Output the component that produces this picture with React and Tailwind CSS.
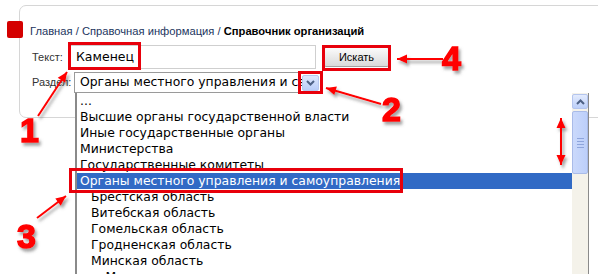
import React from "react";

const items = [
  { t: "...", lvl: 0 },
  { t: "Высшие органы государственной власти", lvl: 0 },
  { t: "Иные государственные органы", lvl: 0 },
  { t: "Министерства", lvl: 0 },
  { t: "Государственные комитеты", lvl: 0 },
  { t: "Органы местного управления и самоуправления", lvl: 0, sel: true },
  { t: "Брестская область", lvl: 1 },
  { t: "Витебская область", lvl: 1 },
  { t: "Гомельская область", lvl: 1 },
  { t: "Гродненская область", lvl: 1 },
  { t: "Минская область", lvl: 1 },
  { t: "г. Минск", lvl: 1 },
];

function Chevron({ up }) {
  return (
    <svg width="9" height="6" viewBox="0 0 9 6">
      <path
        d={up ? "M1 5 L4.5 1.5 L8 5" : "M1 1 L4.5 4.5 L8 1"}
        fill="none"
        stroke="#4d6185"
        strokeWidth="2"
      />
    </svg>
  );
}

function arrowHead(x1, y1, x2, y2, len = 10, hw = 4.5) {
  const dx = x2 - x1;
  const dy = y2 - y1;
  const L = Math.hypot(dx, dy);
  const ux = dx / L;
  const uy = dy / L;
  const bx = x2 - ux * len;
  const by = y2 - uy * len;
  const px = -uy * hw;
  const py = ux * hw;
  return `${x2},${y2} ${bx + px},${by + py} ${bx - px},${by - py}`;
}

function Arrow({ x1, y1, x2, y2, both }) {
  return (
    <g>
      <line x1={x1} y1={y1} x2={x2} y2={y2} stroke="#ff0000" strokeWidth="2" />
      <polygon points={arrowHead(x1, y1, x2, y2)} fill="#ff0000" />
      {both && <polygon points={arrowHead(x2, y2, x1, y1)} fill="#ff0000" />}
    </g>
  );
}

export default function App() {
  return (
    <div className="relative w-[598px] h-[274px] overflow-hidden bg-white font-['Liberation_Sans',sans-serif]">
      {/* Panel */}
      <div className="relative ml-[19px] mt-[5px] h-[113px] w-[620px] rounded-[7px] border border-[#d6d6d6] bg-white">
        <div className="absolute left-[-13px] top-[15px] h-[17px] w-[16px] rounded-[2px] bg-[#d40000]" />
        <div className="pl-[10px] pt-[18px]">
          <div className="text-[11.2px] leading-[15px] text-[#1c355e]">
            Главная / Справочная информация /{" "}
            <span className="font-bold text-black">Справочник организаций</span>
          </div>
          <div className="mt-[6px] flex h-[24px] items-center">
            <div className="w-[40px] pl-[2px] text-[11px] text-[#333]">Текст:</div>
            <div className="flex h-[24px] w-[246px] items-center border border-[#cfcfcf] pl-[5px] font-['DejaVu_Sans',sans-serif] text-[12.5px] text-black">
              Каменец
            </div>
            <button className="ml-[7px] flex h-[20px] w-[67px] items-center justify-center rounded-[3px] border border-[#a3a3a3] bg-gradient-to-b from-[#fbfbfb] to-[#dadada] text-[11px] text-black">
              Искать
            </button>
          </div>
          <div className="mt-[3px] flex h-[21px] items-center">
            <div className="w-[44px] pl-[2px] text-[11px] text-[#333]">Раздел:</div>
            <div className="flex h-[21px] w-[248px] items-center border border-[#9a9a9a] bg-white">
              <div className="flex-1 overflow-hidden whitespace-nowrap pl-[5px] font-['DejaVu_Sans',sans-serif] text-[12.4px] text-black">
                Органы местного управления и самоуправления
              </div>
              <div className="mr-[2px] flex h-[16px] w-[17px] items-center justify-center rounded-[2px] border border-[#b7c8ef] bg-gradient-to-b from-[#dfe8fd] to-[#b9cdf8]">
                <Chevron />
              </div>
            </div>
          </div>
        </div>
      </div>

      {/* Dropdown list */}
      <div className="absolute left-[75px] top-[93px] flex h-[200px] w-[514px] border-l-2 border-r border-[#8a8a8a] bg-white font-['DejaVu_Sans',sans-serif] text-[12.4px] text-black">
        <div className="flex-1">
          {items.map((it, i) => (
            <div
              key={i}
              className={`h-[16px] whitespace-nowrap leading-[16px] ${it.lvl ? "pl-[14px]" : "pl-[3px]"} ${it.sel ? "bg-[#316ac5] text-white" : ""}`}
            >
              {it.t}
            </div>
          ))}
        </div>
        <div className="flex w-[16px] flex-col bg-[#f4f2ea]">
          <div className="mt-[1px] flex h-[15px] items-center justify-center rounded-[2px] border border-[#b4c5ee] bg-gradient-to-b from-[#e3ebfd] to-[#bccff9]">
            <Chevron up />
          </div>
          <div className="mt-[2px] flex h-[63px] flex-col items-center justify-center gap-[2px] rounded-[2px] border border-[#a9bbe8] bg-gradient-to-r from-[#cbd9fb] to-[#bccffa]">
            <div className="h-px w-[7px] bg-[#8ea5dc]" />
            <div className="h-px w-[7px] bg-[#8ea5dc]" />
            <div className="h-px w-[7px] bg-[#8ea5dc]" />
            <div className="h-px w-[7px] bg-[#8ea5dc]" />
          </div>
        </div>
      </div>

      {/* Annotation boxes */}
      <div className="absolute left-[68px] top-[42px] h-[28px] w-[73px] border-[3px] border-[#e8000b]" />
      <div className="absolute left-[322px] top-[45px] h-[26px] w-[69px] border-[3px] border-[#e8000b]" />
      <div className="absolute left-[298px] top-[71px] h-[23px] w-[25px] border-[3px] border-[#e8000b]" />
      <div className="absolute left-[69px] top-[168px] h-[25px] w-[334px] border-[3px] border-[#e8000b]" />

      {/* Arrows and numbers */}
      <svg className="pointer-events-none absolute left-0 top-0" width="598" height="274">
        <defs>
          <filter id="sh" x="-50%" y="-50%" width="200%" height="200%">
            <feDropShadow dx="2" dy="3" stdDeviation="1.5" floodColor="#555" floodOpacity="0.55" />
          </filter>
        </defs>
        <g filter="url(#sh)">
          <Arrow x1={443} y1={59} x2={397} y2={59} />
          <Arrow x1={381} y1={104} x2={326} y2={88} />
          <Arrow x1={38} y1={116} x2={67} y2={72} />
          <Arrow x1={37} y1={218} x2={66} y2={196} />
          <Arrow x1={561} y1={118} x2={561} y2={165} both />
          <g
            fill="#ff0000"
            stroke="#ff0000"
            strokeWidth="1.5"
            fontFamily="'Liberation Sans', sans-serif"
            fontWeight="bold"
            fontSize="34"
          >
            <text x="442" y="70">4</text>
            <text x="382" y="121">2</text>
            <text x="20" y="142">1</text>
            <text x="17" y="248">3</text>
          </g>
        </g>
      </svg>
    </div>
  );
}
